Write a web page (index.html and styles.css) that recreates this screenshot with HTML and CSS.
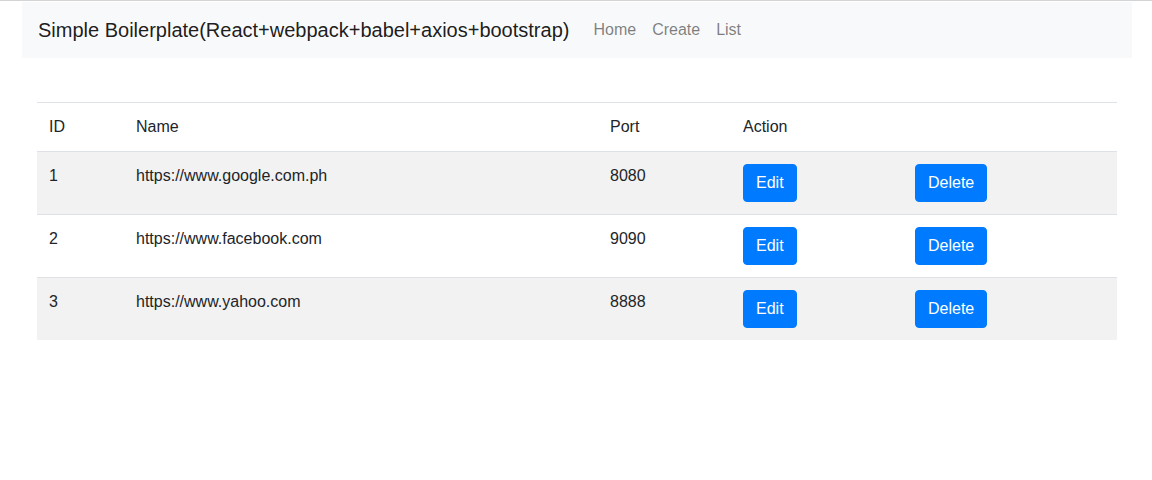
FILE: index.html
```html
<!DOCTYPE html>
<html>
<head>
<meta charset="utf-8">
<link rel="stylesheet" href="styles.css">
</head>
<body>
<div class="topline"></div>
<div class="page">
  <nav class="navbar">
    <span class="brand">Simple Boilerplate(React+webpack+babel+axios+bootstrap)</span>
    <ul class="nav">
      <li><a class="nav-link">Home</a></li>
      <li><a class="nav-link">Create</a></li>
      <li><a class="nav-link">List</a></li>
    </ul>
  </nav>
  <div class="content">
    <table class="table">
      <colgroup>
        <col class="c-id"><col class="c-name"><col class="c-port"><col class="c-edit"><col class="c-del">
      </colgroup>
      <thead>
        <tr><th>ID</th><th>Name</th><th>Port</th><th colspan="2">Action</th></tr>
      </thead>
      <tbody>
        <tr class="odd"><td>1</td><td>https://www.google.com.ph</td><td>8080</td><td><button class="btn">Edit</button></td><td><button class="btn">Delete</button></td></tr>
        <tr><td>2</td><td>https://www.facebook.com</td><td>9090</td><td><button class="btn">Edit</button></td><td><button class="btn">Delete</button></td></tr>
        <tr class="odd"><td>3</td><td>https://www.yahoo.com</td><td>8888</td><td><button class="btn">Edit</button></td><td><button class="btn">Delete</button></td></tr>
      </tbody>
    </table>
  </div>
</div>
</body>
</html>
```
FILE: styles.css
```css
html, body {
  margin: 0;
  padding: 0;
  background: #fff;
  font-family: "Liberation Sans", Arial, sans-serif;
  font-size: 16px;
  line-height: 1.5;
  color: #212529;
}
.topline {
  height: 1px;
  background: #d4d4d4;
  margin-bottom: 1px;
}
.page {
  width: 1110px;
  margin-left: 22px;
}
.navbar {
  display: flex;
  align-items: center;
  background: #f8f9fa;
  padding: 8px 16px;
  height: 40px;
}
.brand {
  font-size: 20px;
  line-height: 30px;
  padding: 5px 0;
  margin-right: 16px;
  color: rgba(0,0,0,.9);
  white-space: nowrap;
}
.nav {
  display: flex;
  list-style: none;
  margin: 0;
  padding: 0;
}
.nav-link {
  display: block;
  padding: 8px;
  color: rgba(0,0,0,.5);
}
.content {
  padding: 44px 15px 0;
}
.table {
  width: 1080px;
  border-collapse: collapse;
  table-layout: fixed;
}
.c-id { width: 87px; }
.c-name { width: 474px; }
.c-port { width: 133px; }
.c-edit { width: 172px; }
.c-del { width: 214px; }
.table th, .table td {
  padding: 12px;
  text-align: left;
  vertical-align: top;
  border-top: 1px solid #dee2e6;
  font-weight: normal;
}
.table th {
  vertical-align: bottom;
}
.table tr.odd td {
  background: rgba(0,0,0,.05);
}
.btn {
  font-family: inherit;
  font-size: 16px;
  line-height: 24px;
  padding: 6px 12px;
  border: 1px solid #007bff;
  border-radius: 4px;
  background: #007bff;
  color: #fff;
  display: inline-block;
  margin: 0;
}
```
